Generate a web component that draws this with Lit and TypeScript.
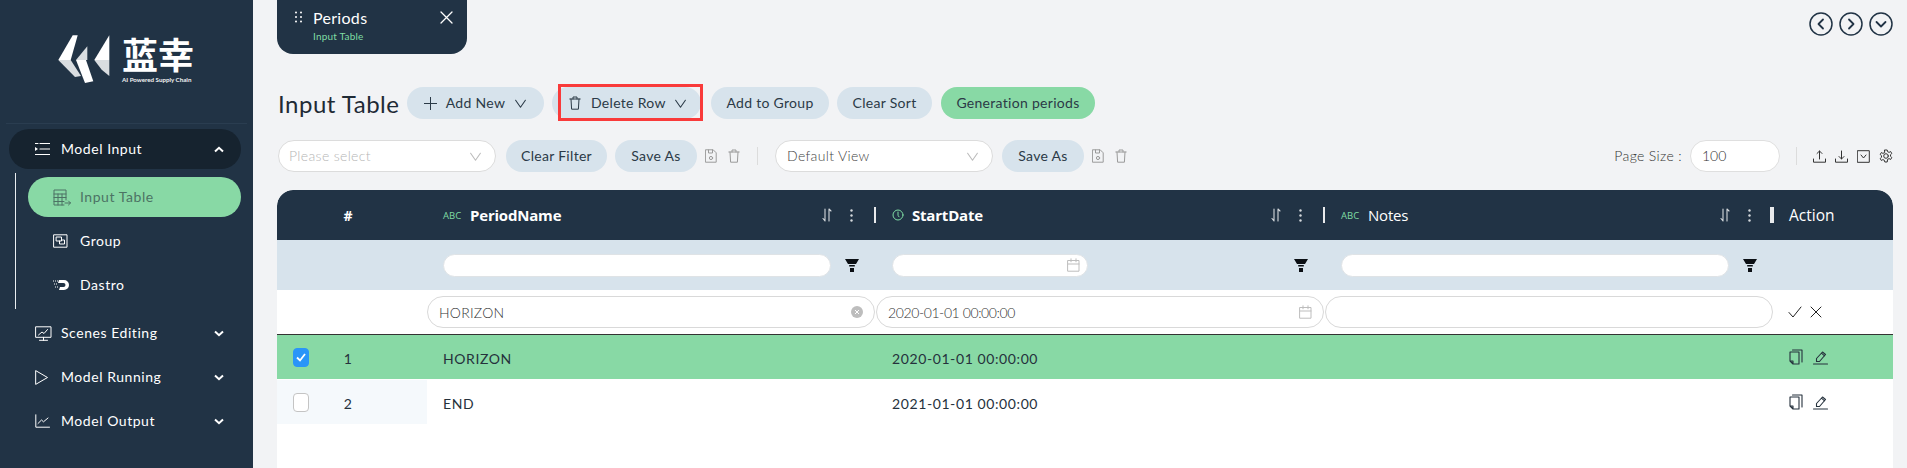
import { LitElement, html, css, svg } from "lit";
import { customElement } from "lit/decorators.js";

const ico = (w: number, h: number, vb: string, body: unknown, cls = "") =>
  html`<svg class="ic ${cls}" width=${w} height=${h} viewBox=${vb} fill="none" stroke="currentColor" stroke-width="1" stroke-linecap="round" stroke-linejoin="round">${body}</svg>`;

const chevDown = (s = 13) => ico(s, s, "0 0 12 12", svg`<path d="M1.5 3 6 9.5 10.5 3"/>`);
const trash = () => ico(12, 14, "0 0 12 14", svg`<path d="M.8 3h10.4M4 3V1h4v2M2 3l.6 10.2h6.8L10 3"/>`);
const save = () => ico(12, 14, "0 0 12 14", svg`<path d="M.8.8h7.4l3 3v9.4H.8zM3.500 1v3h4V1"/><circle cx="6" cy="9" r="1.6"/>`);
const cal = () => ico(13, 14, "0 0 13 14", svg`<path d="M1 2.5h11v10.7H1zM1 6h11M4 .8v3M9 .8v3"/>`);
const sortI = () => ico(10, 14, "0 0 10 14", svg`<path d="M3 1v12L1 10.5M7 13V1l2 2" stroke-width="1.1"/>`);
const dots = () => html`<svg class="ic" width="3" height="13" viewBox="0 0 3 13" fill="currentColor"><circle cx="1.5" cy="1.5" r="1.2"/><circle cx="1.5" cy="6.5" r="1.2"/><circle cx="1.5" cy="11.5" r="1.2"/></svg>`;
const funnel = () => html`<svg class="ic" width="14" height="13" viewBox="0 0 14 13" fill="#0b0f14"><path d="M0 0h14l-3 5H3zM4.200 6h5.600v1.500H4.200zM5 9h4v4H5z"/></svg>`;
const copy = () => ico(14, 16, "0 0 14 16", svg`<path d="M1 3h9v12H4l-3-3zM1 12h3v3M3.500 1H13v12" stroke-width="1.100"/>`);
const pen = () => ico(15, 15, "0 0 15 15", svg`<path d="M.5 14h14M3.500 11.500v-3L9.500 2l3 2.500-6 7zM8.500 3.200l3 2.600" stroke-width="1.100"/>`);
const abc = () => html`<span class="abc">ABC</span>`;
const clock = () => html`<span class="typ">${ico(12, 12, "0 0 12 12", svg`<circle cx="6" cy="6" r="5"/><path d="M6 3v3.300l1 1.500"/>`)}</span>`;
const chevSm = (up = false) => html`<svg class="ic" width="10" height="7" viewBox="0 0 10 7" fill="none" stroke="currentColor" stroke-width="2">${up ? svg`<path d="M1 5.500 5 1.800 9 5.500"/>` : svg`<path d="M1 1.500 5 5.200 9 1.500"/>`}</svg>`;

@customElement("side-bar")
class SideBar extends LitElement {
  static styles = css`
    :host { display: flex; flex-direction: column; width: 253px; height: 468px; background: #213345; color: #fff; font-family: "Lato", sans-serif; font-size: 14px; flex: none; overflow: hidden; }
    .ic { flex: none; display: block; }
    .logo { height: 124px; box-sizing: border-box; border-bottom: 1px solid #2a3d50; margin: 0 6px; padding: 34px 0 0 51px; display: flex; gap: 10px; }
    .brand { display: flex; flex-direction: column; width: 72px; }
    .cn { font: 700 36px/38px "Noto Sans CJK SC", sans-serif; white-space: nowrap; }
    .tag { font: 700 6.200px/10px "Lato", sans-serif; white-space: nowrap; color: #f2f2f2; margin-top: 3px; }
    .txt, .lbl { position: relative; top: -1px; }
    .item { display: flex; align-items: center; height: 44px; padding-left: 35px; padding-right: 29px; letter-spacing: .55px; }
    .item .ico { width: 26px; display: flex; }
    .item .txt { flex: 1; }
    .open { height: 40px; margin: 5px 12px 0 9px; padding-left: 26px; padding-right: 17px; background: #16232f; border-radius: 20px; }
    .sub { margin: 4px 0 2px 15px; padding: 4px 0 2px 0; border-left: 1px solid #e9edf0; display: flex; flex-direction: column; }
    .sub .row { display: flex; align-items: center; height: 44px; padding-left: 37px; letter-spacing: .55px; }
    .sub .row .ico { width: 27px; display: flex; }
    .sub .act { height: 40px; margin: 0 12px 2px 12px; padding-left: 25px; background: #88d9a5; border-radius: 20px; color: #4c7364; }
  `;
  render() {
    return html`
      <div class="logo">
        <svg width="55" height="50" viewBox="0 0 55 50">
          <path fill="#fff" d="M1.300 26 15.700 1.300h5L13.700 26z"/>
          <path fill="#d9dde0" d="M1.300 26H13.700L24 42l-6 1z"/>
          <path fill="#d9dde0" d="M19 26 30.300 12.300V26z"/>
          <path fill="#fff" d="M19 26H29l7.300 21.300L28 49z"/>
          <path fill="#fff" d="M37.300 26 52.300 1.300V26z"/>
          <path fill="#d9dde0" d="M37.300 26H52.300V42L44.700 35.700z"/>
        </svg>
        <div class="brand"><div class="cn">蓝幸</div><div class="tag">AI Powered Supply Chain</div></div>
      </div>
      <div class="item open">
        <span class="ico">${ico(15, 14, "0 0 15 14", svg`<path d="M5 1.500h10M5 7h10M0 12.500h15M0 1.500h3" stroke-width="1.200"/><path fill="currentColor" stroke="none" d="M0 5l3 2-3 2z"/>`)}</span>
        <span class="txt">Model Input</span>${chevSm(true)}
      </div>
      <div class="sub">
        <div class="row act"><span class="ico">${ico(18, 17, "0 0 18 17", svg`<path d="M13 11V1H1v15h10M1 5h12M1 8.500h12M1 12.500h10M5 5v11M9 5v11M12 14h5.500M15.500 12l2 2-2 2"/>`)}</span><span class="lbl">Input Table</span></div>
        <div class="row"><span class="ico">${ico(16, 14, "0 0 16 14", svg`<path d="M1 .8h13v12.400H1zM3.500 3h5v4h-5zM6.500 7v3h5V6H8.500"/>`)}</span><span class="lbl">Group</span></div>
        <div class="row"><span class="ico">${html`<svg class="ic" width="16" height="12" viewBox="0 0 16 12"><path fill="#fff" d="M6 1h5a5 5 0 0 1 0 10H6l1-3h3.500a2 2 0 0 0 0-4H5z"/><path stroke="#fff" stroke-width="1" stroke-dasharray="1 1" d="M0 2h5M1 5h3M2 8h3"/></svg>`}</span><span class="lbl">Dastro</span></div>
      </div>
      <div class="item"><span class="ico">${ico(17, 15, "0 0 17 15", svg`<path d="M1 .8h15v10.500H1zM8.500 11.300v3M4.500 14.300h8M3.500 9l3.500-3 2 1.500 3.500-4"/>`)}</span><span class="txt">Scenes Editing</span>${chevSm()}</div>
      <div class="item"><span class="ico">${ico(13, 15, "0 0 13 15", svg`<path d="M1 .8 12.500 7.500 1 14.200z"/>`)}</span><span class="txt">Model Running</span>${chevSm()}</div>
      <div class="item"><span class="ico">${ico(15, 14, "0 0 15 14", svg`<path d="M.8.800v12.400h13.700M3 9.500l3.500-3.500 2 1.800L13 4"/>`)}</span><span class="txt">Model Output</span>${chevSm()}</div>
    `;
  }
}

@customElement("data-table")
class DataTable extends LitElement {
  static styles = css`
    :host { display: block; margin: 18px 14px 0 0; background: #fff; border-radius: 16px 16px 0 0; overflow: hidden; flex: 1; font-family: "Lato", sans-serif; font-size: 14px; color: #25313c; }
    .ic { flex: none; display: block; }
    .row { display: grid; grid-template-columns: 150px 449px 449px 449px 1fr; }
    .head { height: 50px; background: #213345; color: #fff; border-radius: 16px 16px 0 0; }
    .head > div { display: flex; align-items: center; position: relative; }
    .hc { padding-left: 16px; }
    .num { justify-content: center; box-sizing: border-box; font-family: "Open Sans", sans-serif; font-weight: 700; font-size: 14px; margin-left: 8px; width: 126px; }
    .name { font-family: "Open Sans", sans-serif; font-weight: 700; font-size: 15px; white-space: nowrap; flex: 1; letter-spacing: -.2px; }
    .name.reg { font-weight: 400; }
    .abc { font: 400 9.500px "Open Sans", sans-serif; color: #7fdca3; width: 27px; flex: none; }
    .typ { color: #7fdca3; width: 20px; flex: none; display: flex; }
    .hi { display: flex; align-items: center; color: #d5d9dd; position: relative; left: 1px; }
    .hi .s { width: 24px; display: flex; justify-content: center; }
    .bar { width: 2px; height: 16px; background: #e8eaec; margin-left: 12px; flex: none; }
    .bar.w { width: 4px; margin-left: 10px; }
    .action { padding-left: 15px; font-family: "Open Sans", sans-serif; font-size: 15.500px; }
    .filt { height: 50px; background: #d7e3ec; }
    .filt > div { display: flex; align-items: center; padding: 0 17px 0 16px; gap: 14px; justify-content: space-between; }
    .fin { height: 23px; border-radius: 12px; background: #fff; border: 1px solid #dfe3e6; box-sizing: border-box; flex: 1; display: flex; align-items: center; justify-content: flex-end; padding-right: 7px; color: #bdbdbd; }
    .fin.d { flex: none; width: 196px; }
    .edit { height: 45px; border-bottom: 1.500px solid #333; box-sizing: border-box; background: #fff; }
    .edit > div { display: flex; align-items: center; padding: 0 1px 0 0; }
    .ein { height: 32px; flex: 1; border: 1px solid #d9d9d9; border-radius: 16px; box-sizing: border-box; display: flex; align-items: center; justify-content: space-between; padding: 0 11px; color: #333; white-space: nowrap; letter-spacing: .25px; font-weight: 300; }
    .ein.dt { letter-spacing: -.4px; }
    .calc { color: #bdbdbd; }
    .clr { width: 12px; height: 12px; background: #bdbdbd; border-radius: 50%; color: #fff; display: flex; align-items: center; justify-content: center; }
    .edit > .ea { gap: 8px; padding-left: 14px; color: #222; }
    .dr { height: 44px; }
    .dr > div { display: flex; align-items: center; padding-left: 16px; white-space: nowrap; letter-spacing: .6px; }
    .cell { position: relative; top: 1px; }
    .dr.on { background: #88d9a5; margin-bottom: 1px; }
    .dr > .idx { padding-left: 0; }
    .dr > .ac { gap: 10px; padding-left: 15px; }
    .idxbg { background: #f5f9fc; }
    .cb { width: 16px; height: 19px; border-radius: 4px; border: 1px solid #c4c4c4; background: #fff; box-sizing: border-box; margin: 0 33px 0 16px; display: flex; align-items: center; justify-content: center; flex: none; }
    .cb.on { background: #2a95f8; border-color: #2a95f8; }
    .idn { width: 12px; text-align: center; position: relative; top: 1px; }
  `;
  hd(icon: unknown, name: string, reg = false, wide = false) {
    return html`<div class="hc">${icon}<span class="name ${reg ? "reg" : ""}">${name}</span>
      <span class="hi"><span class="s">${sortI()}</span><span class="s">${dots()}</span></span><span class="bar ${wide ? "w" : ""}"></span></div>`;
  }
  dataRow(on: boolean, n: number, name: string, date: string) {
    return html`<div class="row dr ${on ? "on" : ""}">
      <div class="idx ${on ? "" : "idxbg"}"><span class="cb ${on ? "on" : ""}">${on ? html`<svg width="10" height="9" viewBox="0 0 10 9" fill="none" stroke="#fff" stroke-width="1.800"><path d="M1 4.500 4 7.500 9 1"/></svg>` : ""}</span><span class="idn">${n}</span></div>
      <div><span class="cell">${name}</span></div><div><span class="cell">${date}</span></div><div></div>
      <div class="ac">${copy()}${pen()}</div>
    </div>`;
  }
  render() {
    return html`
      <div class="row head">
        <div class="num">#</div>
        ${this.hd(abc(), "PeriodName")}${this.hd(clock(), "StartDate")}${this.hd(abc(), "Notes", true, true)}
        <div class="action">Action</div>
      </div>
      <div class="row filt">
        <div></div>
        <div><span class="fin"></span>${funnel()}</div>
        <div><span class="fin d">${cal()}</span>${funnel()}</div>
        <div><span class="fin"></span>${funnel()}</div>
        <div></div>
      </div>
      <div class="row edit">
        <div></div>
        <div><span class="ein">HORIZON<span class="clr"><svg width="6" height="6" viewBox="0 0 6 6" stroke="#fff" stroke-width="1"><path d="M1 1l4 4M5 1 1 5"/></svg></span></span></div>
        <div><span class="ein dt">2020-01-01 00:00:00<span class="calc">${cal()}</span></span></div>
        <div><span class="ein"></span></div>
        <div class="ea">${ico(14, 12, "0 0 14 12", svg`<path d="M1 6.500 5 11 13 1"/>`)}${ico(12, 12, "0 0 12 12", svg`<path d="M1 1l10 10M11 1 1 11"/>`)}</div>
      </div>
      ${this.dataRow(true, 1, "HORIZON", "2020-01-01 00:00:00")}
      ${this.dataRow(false, 2, "END", "2021-01-01 00:00:00")}
    `;
  }
}

@customElement("app-root")
export class AppRoot extends LitElement {
  static styles = css`
    :host { display: flex; width: 1907px; height: 468px; overflow: hidden; background: #f2f3f5; font-family: "Lato", sans-serif; font-size: 14px; color: #25313c; }
    .ic { flex: none; display: block; }
    main { flex: 1; display: flex; flex-direction: column; padding-left: 24px; min-width: 0; }
    .top { display: flex; justify-content: space-between; align-items: flex-start; height: 54px; flex: none; }
    .tab { width: 190px; height: 54px; box-sizing: border-box; background: #213345; border-radius: 0 0 16px 16px; color: #fff; padding: 7px 14px 0 18px; display: grid; grid-template-columns: 18px 1fr auto; grid-template-rows: 20px 14px; align-items: center; row-gap: 2px; }
    .tab .t { font-size: 16px; letter-spacing: .3px; }
    .tab .s { grid-column: 2; font-size: 10px; color: #7fdca3; letter-spacing: .2px; }
    .circles { display: flex; gap: 6px; padding: 12px 14px 0 0; color: #213345; }
    .bar1 { display: flex; align-items: center; margin-top: 33px; flex: none; height: 32px; }
    h1 { margin: 0 8px 0 1px; width: 121px; flex: none; font-size: 24px; font-weight: 400; letter-spacing: .5px; white-space: nowrap; color: #1f2a35; }
    .btn { height: 32px; box-sizing: border-box; border-radius: 16px; background: #d7e3ec; display: flex; align-items: center; justify-content: center; white-space: nowrap; flex: none; letter-spacing: .3px; color: #2b3a47; position: relative; padding-bottom: 2px; }
    .btn > .ic { position: relative; top: 1px; }
    .btn.g { background: #88d9a5; }
    .w137 { width: 137px; gap: 9px; }
    .w149 { width: 149px; gap: 10px; margin-left: 8px; padding-left: 17px; justify-content: flex-start; }
    .w149 span { margin-right: -2px; }
    .hl { position: absolute; left: 6px; top: -3px; width: 145px; height: 37px; box-sizing: border-box; border: 3px solid #f93a3a; pointer-events: none; }
    .w118 { width: 118px; margin-left: 10px; }
    .w95 { width: 95px; margin-left: 8px; }
    .w154 { width: 154px; margin-left: 9px; }
    .w101 { width: 101px; margin-left: 10px; }
    .w82 { width: 82px; margin-left: 8px; }
    .w82b { width: 82px; margin-left: 9px; }
    .bar2 { display: flex; align-items: center; margin-top: 21px; height: 32px; flex: none; padding-left: 1px; padding-right: 14px; }
    .sel { height: 32px; box-sizing: border-box; border: 1px solid #dcdcdc; border-radius: 16px; background: #fff; display: flex; align-items: center; justify-content: space-between; padding: 0 13px 2px 11px; flex: none; width: 218px; color: #444; letter-spacing: .35px; font-weight: 300; }
    .sel.ph { color: #b5b5b5; padding-left: 10px; }
    .sel .ic { color: #bbb; position: relative; top: 1px; }
    .gi { color: #9a9a9a; display: flex; gap: 11px; align-items: center; margin-left: 8px; }
    .vr { width: 1px; height: 18px; background: #dcdcdc; flex: none; }
    .vr1 { margin: 0 17px; }
    .vr2 { margin-left: 16px; }
    .sp { flex: 1; }
    .ps { color: #333; letter-spacing: .35px; white-space: nowrap; margin-right: 8px; font-weight: 300; padding-bottom: 2px; }
    .num { width: 90px; height: 32px; box-sizing: border-box; border: 1px solid #dfdfdf; border-radius: 16px; background: #fff; padding: 0 0 2px 11px; display: flex; align-items: center; flex: none; color: #333; font-weight: 300; }
    .ti { display: flex; gap: 9px; align-items: center; margin-left: 16px; color: #333; }
  `;
  render() {
    const c = (d: string) => ico(24, 24, "0 0 24 24", svg`<circle cx="12" cy="12" r="11" stroke-width="1.500"/><path d=${d} stroke-width="1.800"/>`);
    return html`
      <side-bar></side-bar>
      <main>
        <div class="top">
          <div class="tab">
            <svg width="8" height="12" viewBox="0 0 8 12" fill="#fff"><circle cx="1" cy="1.500" r="1"/><circle cx="6" cy="1.500" r="1"/><circle cx="1" cy="6" r="1"/><circle cx="6" cy="6" r="1"/><circle cx="1" cy="10.500" r="1"/><circle cx="6" cy="10.500" r="1"/></svg>
            <span class="t">Periods</span>
            ${ico(13, 13, "0 0 13 13", svg`<path d="M1 1l11 11M12 1 1 12" stroke-width="1.300"/>`)}
            <span class="s">Input Table</span>
          </div>
          <div class="circles">${c("M14 7.500 9.500 12l4.500 4.500")}${c("M10 7.500 14.500 12 10 16.500")}${c("M7.500 10 12 14.500 16.500 10")}</div>
        </div>
        <div class="bar1">
          <h1>Input Table</h1>
          <div class="btn w137">${ico(13, 13, "0 0 13 13", svg`<path d="M6.500 0v13M0 6.500h13"/>`)}<span>Add New</span>${chevDown()}</div>
          <div class="btn w149">${trash()}<span>Delete Row</span>${chevDown()}<div class="hl"></div></div>
          <div class="btn w118">Add to Group</div>
          <div class="btn w95">Clear Sort</div>
          <div class="btn g w154">Generation periods</div>
        </div>
        <div class="bar2">
          <div class="sel ph"><span>Please select</span>${chevDown()}</div>
          <div class="btn w101">Clear Filter</div>
          <div class="btn w82">Save As</div>
          <div class="gi">${save()}${trash()}</div>
          <div class="vr vr1"></div>
          <div class="sel"><span>Default View</span>${chevDown()}</div>
          <div class="btn w82b">Save As</div>
          <div class="gi">${save()}${trash()}</div>
          <div class="sp"></div>
          <span class="ps">Page Size :</span>
          <div class="num">100</div>
          <div class="vr vr2"></div>
          <div class="ti">
            ${ico(13, 13, "0 0 13 13", svg`<path d="M.5 9v3.200h12V9M6.500 9V1M4 3.500 6.500 1 9 3.500"/>`)}
            ${ico(13, 13, "0 0 13 13", svg`<path d="M.5 9v3.200h12V9M6.500 1v8M4 6.500 6.500 9 9 6.500"/>`)}
            ${ico(13, 13, "0 0 13 13", svg`<path d="M.7.700h11.600v11.600H.7zM4 5l2.500 3L9 5"/>`)}
            ${ico(14, 14, "0 0 14 14", svg`<circle cx="7" cy="7" r="2.300"/><path d="M5.800 1h2.400l.4 1.700 1.500.7 1.500-.9 1.200 2-1.300 1.200v1.600l1.300 1.200-1.200 2-1.500-.9-1.500.7L8.200 13H5.800l-.4-1.700-1.500-.7-1.500.9-1.200-2 1.300-1.200V6.700L1.200 5.500l1.200-2 1.500.9 1.500-.7z"/>`)}
          </div>
        </div>
        <data-table></data-table>
      </main>
    `;
  }
}
void SideBar; void DataTable;
